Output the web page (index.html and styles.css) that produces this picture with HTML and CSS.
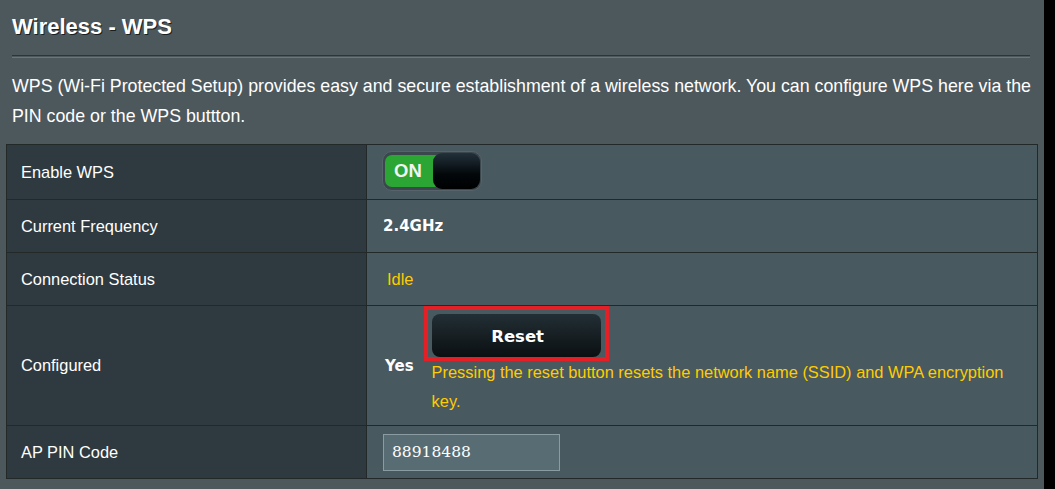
FILE: index.html
```html
<!DOCTYPE html>
<html lang="en">
<head>
<meta charset="utf-8">
<title>Wireless - WPS</title>
<link rel="stylesheet" href="styles.css">
</head>
<body>
<div class="page">
  <h1 class="title">Wireless - WPS</h1>
  <div class="divider"></div>
  <p class="desc">WPS (Wi-Fi Protected Setup) provides easy and secure establishment of a wireless network. You can configure WPS here via the PIN code or the WPS buttton.</p>
  <div class="grid">
    <div class="label">Enable WPS</div>
    <div class="value">
      <div class="toggle">
        <div class="toggle-on">ON</div>
        <div class="toggle-knob"></div>
      </div>
    </div>

    <div class="label">Current Frequency</div>
    <div class="value"><span class="strong">2.4GHz</span></div>

    <div class="label">Connection Status</div>
    <div class="value"><span class="idle">Idle</span></div>

    <div class="label">Configured</div>
    <div class="value">
      <span class="strong yes">Yes</span>
      <div class="reset-block">
        <div class="reset-wrap">
          <button class="btn-reset" type="button">Reset</button>
          <div class="highlight"></div>
        </div>
        <div class="warn">Pressing the reset button resets the network name (SSID) and WPA encryption key.</div>
      </div>
    </div>

    <div class="label">AP PIN Code</div>
    <div class="value"><input class="pin" type="text" value="88918488"></div>
  </div>
</div>
</body>
</html>
```
FILE: styles.css
```css
html, body {
  margin: 0;
  padding: 0;
  background: #000;
}

.page {
  width: 1044px;
  height: 489px;
  background: #4d585d;
  overflow: hidden;
  font-family: "Liberation Sans", Arial, sans-serif;
  color: #fff;
}

.title {
  margin: 0 0 0 12px;
  padding-top: 14px;
  font-size: 22px;
  line-height: 26px;
  font-weight: bold;
  text-shadow: 1px 1px 0 #1a1f22;
}

.divider {
  margin: 15px 14px 0 12px;
  height: 1px;
  border-top: 1px solid #2c3639;
  border-bottom: 1px solid #66777d;
}

.desc {
  margin: 13px 4px 0 12px;
  font-size: 17.8px;
  line-height: 30px;
}

.grid {
  display: grid;
  grid-template-columns: 359px 670px;
  grid-template-rows: 54px 52px 52px 119px 52px;
  gap: 1px;
  width: 1032px;
  box-sizing: border-box;
  margin: 13px 0 0 6px;
  background: #232829;
  border: 1px solid #232829;
}

.label {
  background: #2f3a40;
  display: flex;
  align-items: center;
  padding-left: 14px;
  font-size: 16.4px;
}

.value {
  background: #48595f;
  display: flex;
  align-items: center;
  padding-left: 16px;
  font-size: 16.4px;
}

.strong {
  font-family: "DejaVu Sans", Verdana, sans-serif;
  font-weight: bold;
  font-size: 15px;
}

.idle {
  color: #ffcc00;
  margin-left: 4px;
}

/* toggle */
.toggle {
  width: 100px;
  height: 40px;
  box-sizing: border-box;
  margin-left: -1px;
  margin-bottom: 3px;
  border-radius: 10px;
  background: #3b474c;
  border: 1px solid #56636a;
  padding: 1px;
  display: flex;
}

.toggle-on {
  flex: 1;
  margin: 2px -10px 2px 1px;
  padding-left: 9px;
  border-radius: 7px 0 0 7px;
  background: #2ba533;
  font-weight: bold;
  font-size: 18.5px;
  line-height: 32px;
  color: #f2f2f2;
}

.toggle-knob {
  position: relative;
  width: 47px;
  border-radius: 9px;
  background: linear-gradient(#22313a, #03070a 60%, #000);
}

/* configured row */
.yes {
  margin-left: 2px;
  margin-right: 18px;
}

.reset-block {
  align-self: flex-start;
  display: flex;
  flex-direction: column;
  padding-top: 8px;
  padding-right: 10px;
}

.reset-wrap {
  position: relative;
  width: 169px;
  height: 43px;
}

.btn-reset {
  width: 169px;
  height: 43px;
  border: 0;
  border-radius: 8px;
  background: linear-gradient(#222f35, #0b0f11);
  color: #fff;
  font-family: "DejaVu Sans", Verdana, sans-serif;
  font-weight: bold;
  font-size: 16.5px;
  padding: 2px 0 0 3px;
  margin: 0;
}

.highlight {
  position: absolute;
  left: -8px;
  top: -8px;
  right: -8px;
  bottom: -4px;
  border: 4px solid #e51f26;
  box-sizing: border-box;
  pointer-events: none;
}

.warn {
  margin-top: 1px;
  color: #ffcc00;
  font-size: 16.4px;
  line-height: 29px;
}

/* pin input */
.pin {
  width: 177px;
  height: 37px;
  box-sizing: border-box;
  margin: 0;
  padding: 0 0 0 8px;
  border: 1px solid #8a9ba1;
  background: #586d73;
  color: #fff;
  font-family: "DejaVu Serif", serif;
  font-size: 15.5px;
  outline: none;
}
```
